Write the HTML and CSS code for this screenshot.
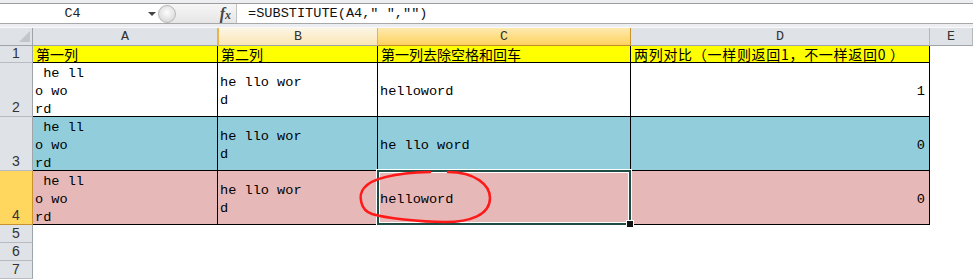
FILE: index.html
```html
<!DOCTYPE html>
<html lang="zh">
<head>
    <meta charset="UTF-8">
    <title>SUBSTITUTE</title>
    <link rel="stylesheet" href="styles.css">
</head>
<body>
    <div class="top">
        <div class="fbar">
            <div class="namebox"><span class="ref">C4</span><span class="drop"></span></div>
            <div class="split"><span class="knob"></span><span class="fx"><i>f</i><i class="x">x</i></span></div>
            <div class="formula">=SUBSTITUTE(A4," ","")</div>
        </div>
    </div>

    <div class="sheet">
        <!-- 列标题 -->
        <div class="corner"><span class="tri"></span></div>
        <div class="hd">A</div>
        <div class="hd hover">B</div>
        <div class="hd sel">C</div>
        <div class="hd">D</div>
        <div class="hd">E</div>

        <!-- 1 -->
        <div class="rh">1</div>
        <div class="c yellow zh">第一列</div>
        <div class="c yellow zh">第二列</div>
        <div class="c yellow zh">第一列去除空格和回车</div>
        <div class="c yellow zh">两列对比（一样则返回1，不一样返回0 ）</div>
        <div class="e"></div>

        <!-- 2 -->
        <div class="rh">2</div>
        <div class="c"> he ll
o wo
rd</div>
        <div class="c">he llo wor
d</div>
        <div class="c">helloword</div>
        <div class="c num">1</div>
        <div class="e"></div>

        <!-- 3 -->
        <div class="rh">3</div>
        <div class="c blue"> he ll
o wo
rd</div>
        <div class="c blue">he llo wor
d</div>
        <div class="c blue">he llo word</div>
        <div class="c blue num">0</div>
        <div class="e"></div>

        <!-- 4 -->
        <div class="rh sel">4</div>
        <div class="c pink"> he ll
o wo
rd</div>
        <div class="c pink">he llo wor
d</div>
        <div class="c pink active">helloword<svg class="circle" width="140" height="58" viewBox="0 0 140 58"><path d="M90 3 C117 3 132 16 132 29 C132 46 112 53 87 53 C62 53 27 49 14 45 C2 41 0 26 6 19 C14 9 37 4 72 3" fill="none" stroke="#ff1a1a" stroke-width="2.5" stroke-linecap="round"/></svg></div>
        <div class="c pink num">0</div>
        <div class="e"></div>

        <div class="rh">5</div>
        <div class="blank"></div>
        <div class="rh">6</div>
        <div class="blank"></div>
        <div class="rh">7</div>
        <div class="blank"></div>
    </div>
</body>
</html>
```

FILE: styles.css
```css
* {
    box-sizing: border-box;
}

body {
    margin: 0;
    background-color: #fff;
    font-family: "Liberation Mono", "Noto Sans CJK SC", monospace;
    color: #000;
}

/* 编辑栏 */
.top {
    background-color: #eceef1;
    padding-top: 3px;
    padding-bottom: 4px;
    border-bottom: 1px solid #fafafa;
    height: 28px;
}

.fbar {
    display: flex;
    height: 21px;
    background-color: #fff;
    border-top: 1px solid #9d9d9d;
    border-bottom: 1px solid #a8a8a8;
}

.namebox {
    display: flex;
    align-items: center;
    width: 158px;
}

.ref {
    width: 145px;
    text-align: center;
    font-size: 13.33px;
    color: #222;
}

.drop {
    margin-left: 3px;
    border-top: 4px solid #444;
    border-left: 4px solid transparent;
    border-right: 4px solid transparent;
}

.split {
    display: flex;
    align-items: center;
    justify-content: space-between;
    width: 79px;
    padding-right: 5px;
    background: linear-gradient(#f6f6f6, #e6e6e6);
    border-radius: 10px 0 0 10px;
    border-right: 1px solid #c2c2c2;
}

.knob {
    width: 18px;
    height: 18px;
    border-radius: 50%;
    border: 1px solid #b9b9b9;
    background: radial-gradient(circle at 50% 40%, #fdfdfd 0, #e4e4e4 55%, #cfcfcf 100%);
}

.fx {
    font-family: "Liberation Serif", serif;
    font-weight: bold;
    font-size: 16px;
    color: #444;
}

.fx .x {
    font-size: 12px;
}

.formula {
    padding-left: 11px;
    font-size: 13.6px;
    line-height: 19px;
    color: #111;
}

/* 表格 */
.sheet {
    display: grid;
    grid-template-columns: 33px 185px 160px 253px 299px 1fr;
    grid-template-rows: 18px 17px 54px 54px 54px 18px 18px 18px;
}

.corner {
    display: flex;
    justify-content: flex-end;
    align-items: flex-end;
    padding: 0 2px 3px 0;
    background-color: #dfe2e7;
    border-right: 1px solid #9fa4ab;
    border-bottom: 1px solid #9fa4ab;
}

.tri {
    border-left: 11px solid transparent;
    border-bottom: 11px solid #c2c6cc;
}

.hd {
    display: flex;
    align-items: center;
    justify-content: center;
    font-size: 13.33px;
    color: #333;
    background-color: #dfe2e7;
    border-right: 1px solid #b4b8be;
    border-bottom: 1px solid #9fa4ab;
}

.hd.hover {
    background: linear-gradient(#fdf6e6, #fbe6b4);
    border-right-color: #e3b34c;
    border-left: 1px solid #e8b548;
}

.hd.sel {
    background: linear-gradient(#feeab0, #fdd25e);
    border-right-color: #c7932a;
    border-bottom-color: #c08d2a;
}

.rh {
    display: flex;
    align-items: flex-end;
    justify-content: center;
    font-family: "Liberation Sans", sans-serif;
    font-size: 14px;
    line-height: 17px;
    color: #333;
    background-color: #dfe2e7;
    border-right: 1px solid #9fa4ab;
    border-bottom: 1px solid #b8bcc2;
}

.rh.sel {
    background-color: #ffd75e;
    border-right-color: #c7932a;
    border-bottom-color: #c7932a;
}

.c {
    display: flex;
    align-items: center;
    padding: 4px 0 0 2px;
    white-space: pre;
    font-size: 13.6px;
    line-height: 18px;
    border-right: 1px solid #000;
    border-bottom: 1px solid #000;
}

.c.zh {
    padding: 0 0 0 3px;
    font-family: "Noto Sans CJK SC", sans-serif;
    font-size: 14px;
    line-height: 16px;
}

.c.zh:nth-child(11) {
    letter-spacing: 0.7px;
}

.c.num {
    justify-content: flex-end;
    padding-right: 4px;
}

.yellow {
    background-color: #ffff00;
}

.blue {
    background-color: #92cddc;
}

.pink {
    background-color: #e6b8b7;
}

/* 选中的单元格 C4 */
.active {
    position: relative;
}

.active::before {
    content: "";
    position: absolute;
    left: -1px;
    top: -1px;
    right: -1px;
    bottom: -1px;
    border: 2px solid #1f4b45;
    box-shadow: 0 0 0 1px #fff, inset 0 0 0 1px #fff;
}

.active::after {
    content: "";
    position: absolute;
    right: -4px;
    bottom: -4px;
    width: 6px;
    height: 6px;
    background-color: #111;
    border: 1px solid #fff;
}

.circle {
    position: absolute;
    left: -20px;
    top: -2px;
    overflow: visible;
    z-index: 2;
}

.blank {
    grid-column: 2 / -1;
}
```
